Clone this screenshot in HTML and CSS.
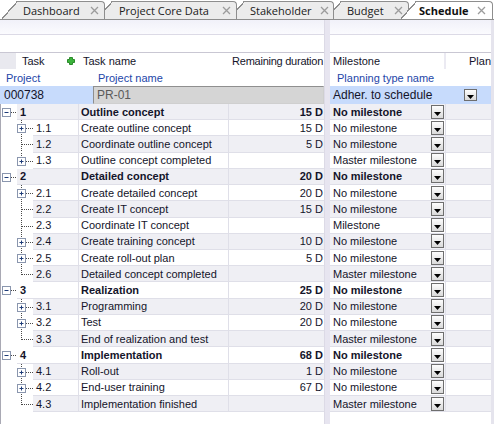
FILE: index.html
```html
<!DOCTYPE html>
<html lang="en">
<head>
    <meta charset="UTF-8">
    <title>Schedule</title>
    <link rel="stylesheet" href="styles.css">
</head>
<body>
    <div class="tabs">
        <div class="tab t1"><span>Dashboard</span><svg class="x" viewBox="0 0 9 9"><use href="#i-close"/></svg></div>
        <div class="tab t2"><span>Project Core Data</span><svg class="x" viewBox="0 0 9 9"><use href="#i-close"/></svg></div>
        <div class="tab t3"><span>Stakeholder</span><svg class="x" viewBox="0 0 9 9"><use href="#i-close"/></svg></div>
        <div class="tab t4"><span>Budget</span><svg class="x" viewBox="0 0 9 9"><use href="#i-close"/></svg></div>
        <div class="tab t5 active"><span>Schedule</span><svg class="x" viewBox="0 0 9 9"><use href="#i-close"/></svg></div>
    </div>

    <div class="main">
        <div class="pane pane-left">
            <div class="toolbar"><div class="toolbar-band"></div></div>
            <div class="head">
                <div class="hcell hcell-task">Task<svg class="add" viewBox="0 0 8 8"><use href="#i-add"/></svg></div>
                <div class="hcell hcell-name">Task name</div>
                <div class="hcell hcell-dur">Remaining duration</div>
            </div>
            <div class="labels">
                <div class="lab-id">Project</div>
                <div class="lab-name">Project name</div>
            </div>
            <div class="values">
                <div class="proj-id">000738</div>
                <div class="proj-name">PR-01</div>
            </div>
            <div class="rows rows-left">
                <div class="row l1 alt"><div class="tree"><svg class="tg1" viewBox="0 0 17 16"><use href="#t-root"/></svg><div class="cell num">1</div></div><div class="cell name">Outline concept</div><div class="cell dur">15 D</div></div>
                <div class="row"><div class="tree"><svg class="tg2" viewBox="0 0 33 16"><use href="#t-mid"/><use href="#t-box"/></svg><div class="cell num">1.1</div></div><div class="cell name">Create outline concept</div><div class="cell dur">15 D</div></div>
                <div class="row alt"><div class="tree"><svg class="tg2" viewBox="0 0 33 16"><use href="#t-mid"/></svg><div class="cell num">1.2</div></div><div class="cell name">Coordinate outline concept</div><div class="cell dur">5 D</div></div>
                <div class="row"><div class="tree"><svg class="tg2" viewBox="0 0 33 16"><use href="#t-last"/><use href="#t-box"/></svg><div class="cell num">1.3</div></div><div class="cell name">Outline concept completed</div><div class="cell dur"></div></div>

                <div class="row l1 alt"><div class="tree"><svg class="tg1" viewBox="0 0 17 16"><use href="#t-root"/></svg><div class="cell num">2</div></div><div class="cell name">Detailed concept</div><div class="cell dur">20 D</div></div>
                <div class="row"><div class="tree"><svg class="tg2" viewBox="0 0 33 16"><use href="#t-mid"/><use href="#t-box"/></svg><div class="cell num">2.1</div></div><div class="cell name">Create detailed concept</div><div class="cell dur">20 D</div></div>
                <div class="row alt"><div class="tree"><svg class="tg2" viewBox="0 0 33 16"><use href="#t-mid"/></svg><div class="cell num">2.2</div></div><div class="cell name">Create IT concept</div><div class="cell dur">15 D</div></div>
                <div class="row"><div class="tree"><svg class="tg2" viewBox="0 0 33 16"><use href="#t-mid"/></svg><div class="cell num">2.3</div></div><div class="cell name">Coordinate IT concept</div><div class="cell dur"></div></div>
                <div class="row alt"><div class="tree"><svg class="tg2" viewBox="0 0 33 16"><use href="#t-mid"/><use href="#t-box"/></svg><div class="cell num">2.4</div></div><div class="cell name">Create training concept</div><div class="cell dur">10 D</div></div>
                <div class="row"><div class="tree"><svg class="tg2" viewBox="0 0 33 16"><use href="#t-mid"/><use href="#t-box"/></svg><div class="cell num">2.5</div></div><div class="cell name">Create roll-out plan</div><div class="cell dur">5 D</div></div>
                <div class="row alt"><div class="tree"><svg class="tg2" viewBox="0 0 33 16"><use href="#t-last"/></svg><div class="cell num">2.6</div></div><div class="cell name">Detailed concept completed</div><div class="cell dur"></div></div>

                <div class="row l1"><div class="tree"><svg class="tg1" viewBox="0 0 17 16"><use href="#t-root"/></svg><div class="cell num">3</div></div><div class="cell name">Realization</div><div class="cell dur">25 D</div></div>
                <div class="row alt"><div class="tree"><svg class="tg2" viewBox="0 0 33 16"><use href="#t-mid"/><use href="#t-box"/></svg><div class="cell num">3.1</div></div><div class="cell name">Programming</div><div class="cell dur">20 D</div></div>
                <div class="row"><div class="tree"><svg class="tg2" viewBox="0 0 33 16"><use href="#t-mid"/><use href="#t-box"/></svg><div class="cell num">3.2</div></div><div class="cell name">Test</div><div class="cell dur">20 D</div></div>
                <div class="row alt"><div class="tree"><svg class="tg2" viewBox="0 0 33 16"><use href="#t-last"/></svg><div class="cell num">3.3</div></div><div class="cell name">End of realization and test</div><div class="cell dur"></div></div>

                <div class="row l1"><div class="tree"><svg class="tg1" viewBox="0 0 17 16"><use href="#t-root"/></svg><div class="cell num">4</div></div><div class="cell name">Implementation</div><div class="cell dur">68 D</div></div>
                <div class="row alt"><div class="tree"><svg class="tg2" viewBox="0 0 33 16"><use href="#t-mid"/><use href="#t-box"/></svg><div class="cell num">4.1</div></div><div class="cell name">Roll-out</div><div class="cell dur">1 D</div></div>
                <div class="row"><div class="tree"><svg class="tg2" viewBox="0 0 33 16"><use href="#t-mid"/><use href="#t-box"/></svg><div class="cell num">4.2</div></div><div class="cell name">End-user training</div><div class="cell dur">67 D</div></div>
                <div class="row alt"><div class="tree"><svg class="tg2" viewBox="0 0 33 16"><use href="#t-last"/></svg><div class="cell num">4.3</div></div><div class="cell name">Implementation finished</div><div class="cell dur"></div></div>
            </div>
        </div>

        <div class="splitter"></div>

        <div class="pane pane-right">
            <div class="toolbar"><div class="toolbar-band"></div></div>
            <div class="head">
                <div class="hcell hcell-ms">Milestone</div>
                <div class="hcell hcell-plan">Planning type</div>
            </div>
            <div class="labels">
                <div class="lab-plan">Planning type name</div>
            </div>
            <div class="values">
                <div class="adher">Adher. to schedule<span class="combo combo-big"><svg viewBox="0 0 7 4"><use href="#i-arrow"/></svg></span></div>
            </div>
            <div class="rows">
                <div class="row l1 alt"><div class="cell ms">No milestone<span class="combo"><svg viewBox="0 0 7 4"><use href="#i-arrow"/></svg></span></div><div class="cell plan"></div></div>
                <div class="row"><div class="cell ms">No milestone<span class="combo"><svg viewBox="0 0 7 4"><use href="#i-arrow"/></svg></span></div><div class="cell plan"></div></div>
                <div class="row alt"><div class="cell ms">No milestone<span class="combo"><svg viewBox="0 0 7 4"><use href="#i-arrow"/></svg></span></div><div class="cell plan"></div></div>
                <div class="row"><div class="cell ms">Master milestone<span class="combo"><svg viewBox="0 0 7 4"><use href="#i-arrow"/></svg></span></div><div class="cell plan"></div></div>

                <div class="row l1 alt"><div class="cell ms">No milestone<span class="combo"><svg viewBox="0 0 7 4"><use href="#i-arrow"/></svg></span></div><div class="cell plan"></div></div>
                <div class="row"><div class="cell ms">No milestone<span class="combo"><svg viewBox="0 0 7 4"><use href="#i-arrow"/></svg></span></div><div class="cell plan"></div></div>
                <div class="row alt"><div class="cell ms">No milestone<span class="combo"><svg viewBox="0 0 7 4"><use href="#i-arrow"/></svg></span></div><div class="cell plan"></div></div>
                <div class="row"><div class="cell ms">Milestone<span class="combo"><svg viewBox="0 0 7 4"><use href="#i-arrow"/></svg></span></div><div class="cell plan"></div></div>
                <div class="row alt"><div class="cell ms">No milestone<span class="combo"><svg viewBox="0 0 7 4"><use href="#i-arrow"/></svg></span></div><div class="cell plan"></div></div>
                <div class="row"><div class="cell ms">No milestone<span class="combo"><svg viewBox="0 0 7 4"><use href="#i-arrow"/></svg></span></div><div class="cell plan"></div></div>
                <div class="row alt"><div class="cell ms">Master milestone<span class="combo"><svg viewBox="0 0 7 4"><use href="#i-arrow"/></svg></span></div><div class="cell plan"></div></div>

                <div class="row l1"><div class="cell ms">No milestone<span class="combo"><svg viewBox="0 0 7 4"><use href="#i-arrow"/></svg></span></div><div class="cell plan"></div></div>
                <div class="row alt"><div class="cell ms">No milestone<span class="combo"><svg viewBox="0 0 7 4"><use href="#i-arrow"/></svg></span></div><div class="cell plan"></div></div>
                <div class="row"><div class="cell ms">No milestone<span class="combo"><svg viewBox="0 0 7 4"><use href="#i-arrow"/></svg></span></div><div class="cell plan"></div></div>
                <div class="row alt"><div class="cell ms">Master milestone<span class="combo"><svg viewBox="0 0 7 4"><use href="#i-arrow"/></svg></span></div><div class="cell plan"></div></div>

                <div class="row l1"><div class="cell ms">No milestone<span class="combo"><svg viewBox="0 0 7 4"><use href="#i-arrow"/></svg></span></div><div class="cell plan"></div></div>
                <div class="row alt"><div class="cell ms">No milestone<span class="combo"><svg viewBox="0 0 7 4"><use href="#i-arrow"/></svg></span></div><div class="cell plan"></div></div>
                <div class="row"><div class="cell ms">No milestone<span class="combo"><svg viewBox="0 0 7 4"><use href="#i-arrow"/></svg></span></div><div class="cell plan"></div></div>
                <div class="row alt"><div class="cell ms">Master milestone<span class="combo"><svg viewBox="0 0 7 4"><use href="#i-arrow"/></svg></span></div><div class="cell plan"></div></div>
            </div>
        </div>
    </div>

    <!-- shared icon parts -->
    <svg class="defs">
        <defs>
            <path id="i-close" d="M1 1l7 7M8 1l-7 7" stroke="#9c9c9c" stroke-width="1.3" fill="none"/>
            <path id="i-arrow" d="M0 0h7l-3.5 4z" fill="#000"/>
            <g id="i-add">
                <path d="M2.5 0.5h3v2h2v3h-2v2h-3v-2h-2v-3h2z" fill="#3cb43c" stroke="#2a8a2a" stroke-width="1"/>
            </g>
            <g id="t-root">
                <rect x="2.5" y="4.5" width="8" height="8" fill="#fff" stroke="#8a96ae"/>
                <path d="M4.5 8.5h4" stroke="#1e3c78"/>
                <path d="M11 8.5h6" stroke="#4a4a4a" stroke-dasharray="1 1"/>
            </g>
            <g id="t-mid">
                <path d="M21.5 0v16" stroke="#4a4a4a" stroke-dasharray="1 1"/>
                <path d="M22 8.5h11" stroke="#4a4a4a" stroke-dasharray="1 1"/>
            </g>
            <g id="t-last">
                <path d="M21.5 0v9" stroke="#4a4a4a" stroke-dasharray="1 1"/>
                <path d="M22 8.5h11" stroke="#4a4a4a" stroke-dasharray="1 1"/>
            </g>
            <g id="t-box">
                <rect x="17.5" y="4.5" width="8" height="8" fill="#fff" stroke="#8a96ae"/>
                <path d="M19.5 8.5h4M21.5 6.5v4" stroke="#1e3c78"/>
            </g>
        </defs>
    </svg>
</body>
</html>
```

FILE: styles.css
```css
* {
    box-sizing: border-box;
}

body {
    margin: 0;
    width: 494px;
    height: 424px;
    overflow: hidden;
    background: #fff;
    font-family: "Liberation Sans", Arial, sans-serif;
    font-size: 11px;
    color: #14142a;
}

/* tab strip */
.tabs {
    display: flex;
    align-items: flex-end;
    gap: 8px;
    height: 20px;
    padding-left: 18px;
    border-bottom: 1px solid #8e8e8e;
}

.tab {
    --fill: #ececec;
    position: relative;
    display: flex;
    align-items: center;
    justify-content: space-between;
    flex: none;
    height: 18px;
    padding: 0 5px 0 5px;
    background: var(--fill);
    border-top: 1px solid #8e8e8e;
    border-right: 1px solid #8e8e8e;
    border-top-right-radius: 4px;
    font-family: "Open Sans", sans-serif;
    font-size: 11px;
    color: #202020;
    white-space: nowrap;
}

.tab::before {
    content: "";
    position: absolute;
    left: -16px;
    top: -1px;
    width: 16px;
    height: 18px;
    background: linear-gradient(to bottom right,
        transparent calc(50% - 0.8px),
        #8e8e8e calc(50% - 0.8px),
        #8e8e8e calc(50% + 0.5px),
        var(--fill) calc(50% + 0.5px));
}

.tab .x {
    width: 9px;
    height: 9px;
    flex: none;
}

.t1 { width: 87px; z-index: 5; }
.t2 { width: 124px; z-index: 4; padding-left: 6px; }
.t3 { width: 89px; z-index: 3; padding-right: 4px; }
.t4 { width: 67px; z-index: 2; }
.t5 { width: 76px; z-index: 6; padding-left: 2px; padding-right: 6px; }

.tab.active {
    --fill: #fff;
    font-weight: bold;
    color: #111;
}

/* grid area */
.main {
    display: flex;
    height: 404px;
}

.pane {
    display: flex;
    flex-direction: column;
}

.pane-left {
    width: 324px;
}

.pane-right {
    width: 164px;
    border-right: 3px solid #e5e4ed;
}

.splitter {
    width: 6px;
    background: #e7e5f0;
    border-left: 1px solid #dcdae6;
}

.toolbar {
    height: 32px;
    flex: none;
}

.toolbar-band {
    height: 15px;
    background: linear-gradient(#f1f1f9, #fbfbfe);
    border-bottom: 1px solid #dcdae6;
}

.head {
    display: flex;
    height: 17px;
    flex: none;
    border-top: 1px solid #c9c7d3;
}

.hcell {
    display: flex;
    align-items: center;
    white-space: nowrap;
    overflow: hidden;
}

.hcell-task {
    width: 79px;
    padding-left: 22px;
    background: linear-gradient(to right, #e9e9ef 16px, #fff 16px);
}

.hcell-task .add {
    width: 8px;
    height: 8px;
    margin-left: auto;
    margin-right: 4px;
}

.hcell-name {
    width: 150px;
    padding-left: 4px;
}

.hcell-dur {
    width: 95px;
    justify-content: flex-end;
    padding-right: 1px;
    letter-spacing: -0.25px;
}

.hcell-ms {
    width: 116px;
    padding-left: 3px;
    border-right: 2px solid #ebeaf2;
}

.hcell-plan {
    width: 45px;
    padding-left: 23px;
}

.labels {
    display: flex;
    align-items: center;
    height: 17px;
    flex: none;
    color: #2346a8;
}

.lab-id {
    width: 93px;
    padding-left: 6px;
}

.lab-name {
    padding-left: 5px;
}

.lab-plan {
    padding-left: 7px;
}

.values {
    display: flex;
    height: 18px;
    flex: none;
    font-size: 12px;
}

.proj-id {
    display: flex;
    align-items: center;
    width: 93px;
    padding-left: 4px;
    background: #c7dbfc;
}

.proj-name {
    display: flex;
    align-items: center;
    flex: 1;
    padding-left: 3px;
    background: #d5d5d5;
    border: 1px solid;
    border-color: #8f8f8f #cfcfcf #cfcfcf #8f8f8f;
    color: #5a5a5a;
}

.adher {
    display: flex;
    align-items: center;
    flex: 1;
    padding-left: 3px;
    background: #c7dbfc;
}

/* rows */
.rows {
    flex: 1;
}

.rows-left {
    box-shadow: inset 1px 0 #a9a9b4;
}

.row {
    display: flex;
    height: 16.22px;
}

.l1 {
    font-weight: bold;
}

.cell {
    display: flex;
    align-items: center;
    white-space: nowrap;
    overflow: hidden;
    border-bottom: 1px solid #dfdfe8;
    border-right: 1px solid #dfdfe8;
}

.alt .cell {
    background: #efeff4;
}

.tree {
    display: flex;
    width: 79px;
}

.tg1 {
    width: 17px;
    height: 16px;
    flex: none;
}

.tg2 {
    width: 33px;
    height: 16px;
    flex: none;
}

.num {
    flex: 1;
    padding-left: 3px;
}

.name {
    width: 150px;
    padding-left: 2px;
}

.dur {
    width: 95px;
    justify-content: flex-end;
    padding-right: 1px;
    border-right: none;
}

.ms {
    width: 116px;
    padding-left: 3px;
    justify-content: space-between;
}

.plan {
    width: 45px;
    border-right: none;
}

.combo {
    display: flex;
    align-items: flex-end;
    justify-content: center;
    flex: none;
    width: 13px;
    height: 14px;
    margin-right: 1px;
    padding-bottom: 2px;
    border: 1px solid #6e6e6e;
    background: linear-gradient(#fdfdfd, #dadada);
}

.combo svg {
    width: 7px;
    height: 4px;
}

.combo-big {
    height: 12px;
    margin-left: auto;
    margin-right: 14px;
    padding-bottom: 1px;
}

.defs {
    display: block;
    width: 0;
    height: 0;
}
```
